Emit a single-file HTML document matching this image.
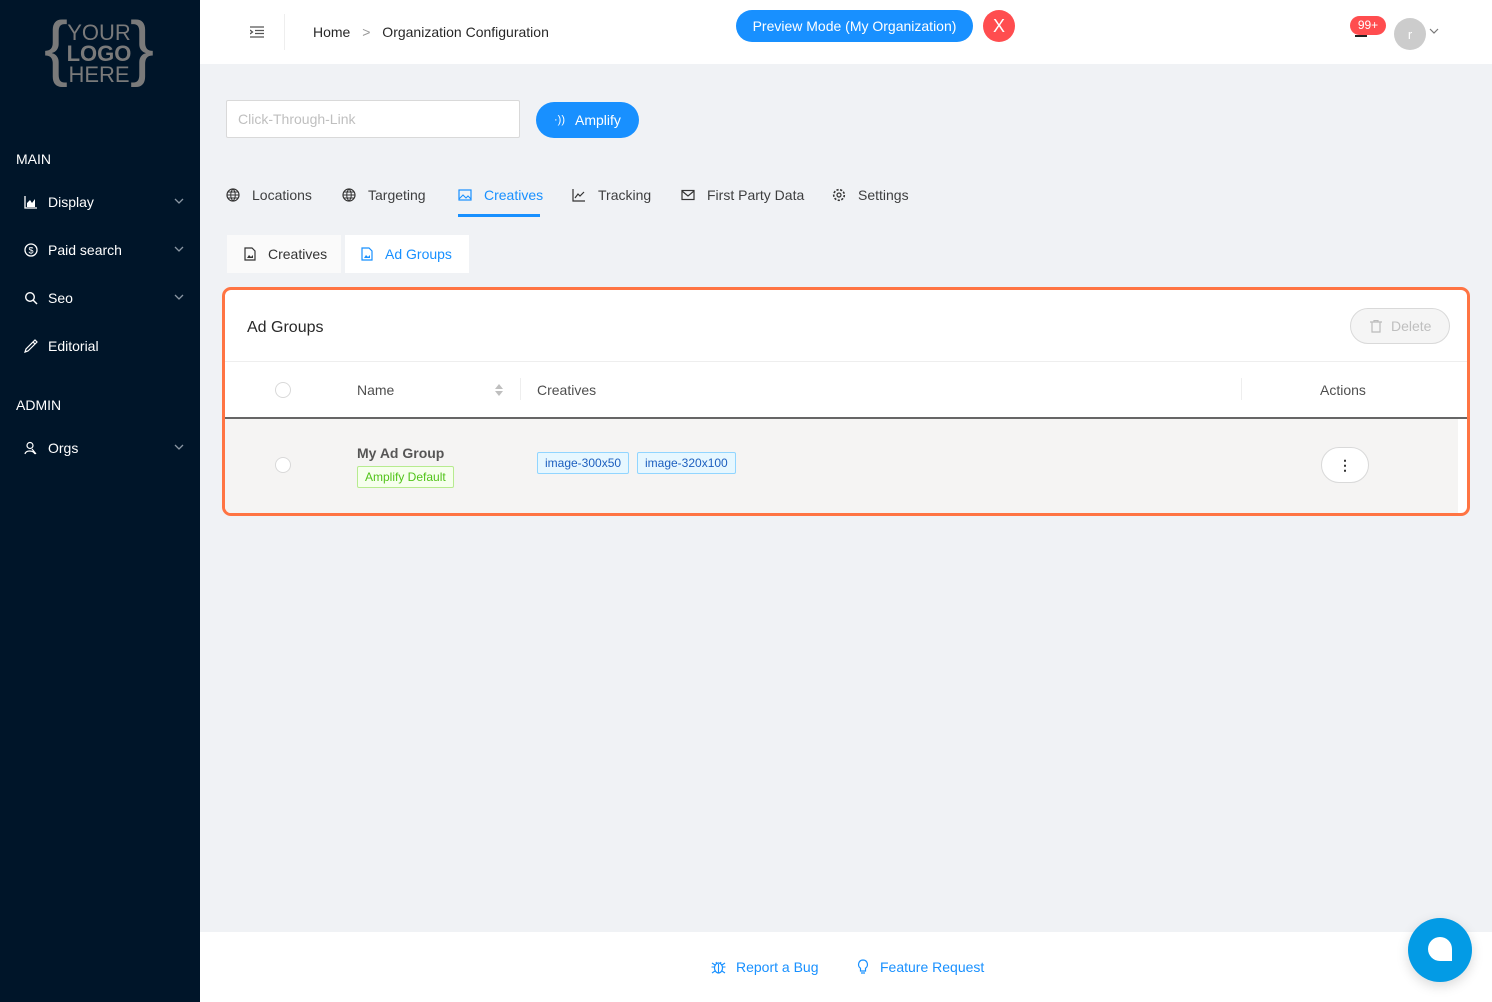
<!DOCTYPE html>
<html><head><meta charset="utf-8"><style>
*{box-sizing:border-box;margin:0;padding:0}
body{width:1492px;height:1002px;overflow:hidden;background:#f0f2f5;font-family:"Liberation Sans",sans-serif;font-size:14px;color:rgba(0,0,0,.85);position:relative}
.a{position:absolute}
#side{left:0;top:0;width:200px;height:1002px;background:#001529;color:#fff}
.sec{position:absolute;left:16px;font-size:14px}
.item{position:absolute;left:24px;font-size:14px;display:flex;align-items:center;gap:10px;width:160px}
.item svg{width:14px;height:14px}
.item svg.chev{position:absolute;right:0;top:3px;width:10px;height:8px}
#hdr{left:200px;top:0;width:1292px;height:64px;background:#fff}
.tab{position:absolute;top:187px;display:flex;align-items:center;gap:12px;font-size:14px;color:rgba(0,0,0,.75)}
.tab svg{width:14px;height:14px}
</style></head><body>
<div id="side" class="a">
  <div class="a" style="left:44px;top:10px;width:110px;height:84px;color:#7a7a7a;text-align:center">
    <div class="a" style="left:0;top:-4px;font-size:72px;font-weight:300;line-height:84px">{</div>
    <div class="a" style="right:0;top:-4px;font-size:72px;font-weight:300;line-height:84px">}</div>
    <div class="a" style="left:22px;top:12px;width:66px;font-size:22px;line-height:21px">YOUR<br><b>LOGO</b><br>HERE</div>
  </div>
  <div class="sec" style="top:151px">MAIN</div>
  <div class="item" style="top:194px"><svg viewBox="0 0 14 14"><path d="M1 1v12h12" stroke="#fff" fill="none" stroke-width="1.3"/><path d="M3 12V8l3-3 2 3 3-4v8z" fill="#fff"/></svg>Display<svg class="chev" viewBox="0 0 10 8"><path d="M1 2l4 4 4-4" stroke="#8a96a3" fill="none" stroke-width="1.3"/></svg></div>
  <div class="item" style="top:242px"><svg viewBox="0 0 14 14"><circle cx="7" cy="7" r="6" stroke="#fff" fill="none" stroke-width="1.3"/><text x="7" y="10.5" font-size="9" text-anchor="middle" fill="#fff">$</text></svg>Paid search<svg class="chev" viewBox="0 0 10 8"><path d="M1 2l4 4 4-4" stroke="#8a96a3" fill="none" stroke-width="1.3"/></svg></div>
  <div class="item" style="top:290px"><svg viewBox="0 0 14 14"><circle cx="6" cy="6" r="4.3" stroke="#fff" fill="none" stroke-width="1.4"/><path d="M9 9l4 4" stroke="#fff" stroke-width="1.5"/></svg>Seo<svg class="chev" viewBox="0 0 10 8"><path d="M1 2l4 4 4-4" stroke="#8a96a3" fill="none" stroke-width="1.3"/></svg></div>
  <div class="item" style="top:338px"><svg viewBox="0 0 14 14"><path d="M1 13l3-1 7-7-2-2-7 7zM9 3l2-2 2 2-2 2" stroke="#fff" fill="none" stroke-width="1.2"/></svg>Editorial</div>
  <div class="sec" style="top:397px">ADMIN</div>
  <div class="item" style="top:440px"><svg viewBox="0 0 14 14"><circle cx="6" cy="4.5" r="3" stroke="#fff" fill="none" stroke-width="1.2"/><path d="M1 13c1-4 8-4 10 0M8 8l4 5" stroke="#fff" fill="none" stroke-width="1.2"/></svg>Orgs<svg class="chev" viewBox="0 0 10 8"><path d="M1 2l4 4 4-4" stroke="#8a96a3" fill="none" stroke-width="1.3"/></svg></div>
</div>

<div id="hdr" class="a">
  <svg class="a" style="left:50px;top:26px" width="14" height="12" viewBox="0 0 14 12"><path d="M0 1h14M5 4.5h9M5 7.5h9M0 11h14M0 4l2.5 2L0 8" stroke="#555" fill="none" stroke-width="1.3"/></svg>
  <div class="a" style="left:84px;top:14px;width:1px;height:36px;background:#eee"></div>
  <div class="a" style="left:113px;top:24px;font-size:14px;color:rgba(0,0,0,.85)">Home <span style="color:#999;margin:0 8px">&gt;</span> Organization Configuration</div>
  <div class="a" style="left:536px;top:10px;width:237px;height:32px;border-radius:16px;background:#1890ff;color:#fff;font-size:14px;line-height:32px;text-align:center">Preview Mode (My Organization)</div>
  <div class="a" style="left:783px;top:10px;width:32px;height:32px;border-radius:50%;background:#ff4d4f;color:#fff;font-size:18px;line-height:32px;text-align:center">X</div>
  <div class="a" style="left:1150px;top:16px;width:36px;height:19px;border-radius:10px;background:#ff4d4f;color:#fff;font-size:12px;line-height:19px;text-align:center">99+</div>
  <div class="a" style="left:1155px;top:35px;width:12px;height:2px;background:#222"></div>
  <div class="a" style="left:1194px;top:18px;width:32px;height:32px;border-radius:50%;background:#ccc;color:#fff;font-size:13px;line-height:34px;text-align:center">r</div>
  <svg class="a" style="left:1229px;top:28px" width="10" height="7" viewBox="0 0 10 7"><path d="M1 1l4 4 4-4" stroke="#777" fill="none" stroke-width="1.2"/></svg>
</div>

<div class="a" style="left:226px;top:100px;width:294px;height:38px;background:#fff;border:1px solid #d9d9d9;border-radius:2px;color:#bfbfbf;padding-left:11px;line-height:36px">Click-Through-Link</div>
<div class="a" style="left:536px;top:102px;width:103px;height:36px;border-radius:18px;background:#1890ff;color:#fff;line-height:36px;font-size:14px;padding-left:39px">Amplify<span class="a" style="left:18px;top:0;font-size:11px">·))</span></div>

<div class="tab" style="left:226px"><svg viewBox="0 0 14 14"><circle cx="7" cy="7" r="6" stroke="#333" fill="none" stroke-width="1.2"/><path d="M1 7h12M7 1c-3 3-3 9 0 12M7 1c3 3 3 9 0 12M2 4h10M2 10h10" stroke="#333" fill="none" stroke-width="1"/></svg>Locations</div>
<div class="tab" style="left:342px"><svg viewBox="0 0 14 14"><circle cx="7" cy="7" r="6" stroke="#333" fill="none" stroke-width="1.2"/><path d="M1 7h12M7 1c-3 3-3 9 0 12M7 1c3 3 3 9 0 12M2 4h10M2 10h10" stroke="#333" fill="none" stroke-width="1"/></svg>Targeting</div>
<div class="tab" style="left:458px;color:#1890ff"><svg viewBox="0 0 14 14"><rect x="1" y="2" width="12" height="10" stroke="#1890ff" fill="none" stroke-width="1.2"/><path d="M1 11l4-4 3 3 2-2 3 3" stroke="#1890ff" fill="none"/></svg>Creatives</div>
<div class="a" style="left:458px;top:214px;width:82px;height:3px;background:#1890ff"></div>
<div class="tab" style="left:572px"><svg viewBox="0 0 14 14"><path d="M1 1v12h12M3 10l3-4 2 2 4-4" stroke="#333" fill="none" stroke-width="1.2"/></svg>Tracking</div>
<div class="tab" style="left:681px"><svg viewBox="0 0 14 14"><rect x="1" y="2.5" width="12" height="9" stroke="#333" fill="none" stroke-width="1.2"/><path d="M1 3l6 5 6-5" stroke="#333" fill="none" stroke-width="1.2"/></svg>First Party Data</div>
<div class="tab" style="left:832px"><svg viewBox="0 0 14 14"><circle cx="7" cy="7" r="2" stroke="#333" fill="none" stroke-width="1.2"/><circle cx="7" cy="7" r="5.3" stroke="#333" fill="none" stroke-width="1.6" stroke-dasharray="2.2 1.5"/></svg>Settings</div>

<div class="a" style="left:227px;top:235px;width:114px;height:38px;background:#fafafa;display:flex;align-items:center;gap:12px;padding-left:17px;color:rgba(0,0,0,.8)"><svg width="12" height="14" viewBox="0 0 12 14"><path d="M1 1h7l3 3v9H1z" stroke="#333" fill="none" stroke-width="1.2"/><path d="M3 11l2-3 2 2 2-2v3z" fill="#333"/></svg>Creatives</div>
<div class="a" style="left:345px;top:235px;width:124px;height:38px;background:#fff;display:flex;align-items:center;gap:12px;padding-left:16px;color:#1890ff"><svg width="12" height="14" viewBox="0 0 12 14"><path d="M1 1h7l3 3v9H1z" stroke="#1890ff" fill="none" stroke-width="1.2"/><path d="M3 11l2-3 2 2 2-2v3z" fill="#1890ff"/></svg>Ad Groups</div>

<div class="a" style="left:222px;top:287px;width:1248px;height:229px;border:3px solid #ff7443;border-radius:9px;background:#fff;overflow:hidden">
  <div class="a" style="left:22px;top:29px;font-size:16px;color:rgba(0,0,0,.85)">Ad Groups</div>
  <div class="a" style="left:1125px;top:18px;width:100px;height:36px;border:1px solid #d9d9d9;border-radius:18px;background:#f5f5f5;color:#bfbfbf;line-height:34px;padding-left:40px">Delete
    <svg class="a" style="left:19px;top:11px" width="12" height="13" viewBox="0 0 12 13"><path d="M0 2h12M4 2V0.5h4V2M2 2v10h8V2" stroke="#bbb" fill="none" stroke-width="1.2"/></svg></div>
  <div class="a" style="left:0;top:71px;width:1242px;height:1px;background:#eee"></div>
  <div class="a" style="left:50px;top:92px;width:16px;height:16px;border:1px solid #d9d9d9;border-radius:50%;background:#fff"></div>
  <div class="a" style="left:132px;top:92px;color:rgba(0,0,0,.7)">Name</div>
  <svg class="a" style="left:270px;top:93px" width="8" height="14" viewBox="0 0 8 14"><path d="M0 6l4-5 4 5zM0 8l4 5 4-5z" fill="#bfbfbf"/></svg>
  <div class="a" style="left:295px;top:88px;width:1px;height:22px;background:#eee"></div>
  <div class="a" style="left:312px;top:92px;color:rgba(0,0,0,.7)">Creatives</div>
  <div class="a" style="left:1016px;top:88px;width:1px;height:22px;background:#eee"></div>
  <div class="a" style="left:1095px;top:92px;color:rgba(0,0,0,.7)">Actions</div>
  <div class="a" style="left:0;top:127px;width:1242px;height:2px;background:#666"></div>
  <div class="a" style="left:0;top:129px;width:1233px;height:100px;background:#f5f4f3"></div>
  <div class="a" style="left:50px;top:167px;width:16px;height:16px;border:1px solid #d9d9d9;border-radius:50%;background:#fff"></div>
  <div class="a" style="left:132px;top:155px;font-weight:bold;color:rgba(0,0,0,.65)">My Ad Group</div>
  <div class="a" style="left:132px;top:176px;height:22px;padding:0 7px;border:1px solid #b7eb8f;background:#f6ffed;color:#52c41a;font-size:12px;line-height:20px;border-radius:2px">Amplify Default</div>
  <div class="a" style="left:312px;top:162px;height:22px;padding:0 7px;border:1px solid #91d5ff;background:#e6f7ff;color:#1d5fbf;font-size:12px;line-height:20px;border-radius:2px">image-300x50</div>
  <div class="a" style="left:412px;top:162px;height:22px;padding:0 7px;border:1px solid #91d5ff;background:#e6f7ff;color:#1d5fbf;font-size:12px;line-height:20px;border-radius:2px">image-320x100</div>
  <div class="a" style="left:1096px;top:157px;width:48px;height:36px;border:1px solid #d9d9d9;border-radius:18px;background:#fff;text-align:center;line-height:34px;font-weight:bold;color:#333">⋮</div>
</div>

<div class="a" style="left:200px;top:932px;width:1292px;height:70px;background:#fff"></div>
<svg class="a" style="left:711px;top:959px" width="15" height="16" viewBox="0 0 15 16"><ellipse cx="7.5" cy="9" rx="4" ry="5" stroke="#1890ff" fill="none" stroke-width="1.2"/><path d="M5 3l1 2M10 3l-1 2M0.5 8h3M11.5 8h3M1 4l3 2M14 4l-3 2M1 14l3-2M14 14l-3-2M7.5 5v9" stroke="#1890ff" fill="none" stroke-width="1.1"/></svg>
<div class="a" style="left:736px;top:959px;color:#1890ff;font-size:14px">Report a Bug</div>
<svg class="a" style="left:857px;top:959px" width="12" height="16" viewBox="0 0 12 16"><path d="M6 1a4.5 4.5 0 0 0-2.5 8.2V12h5V9.2A4.5 4.5 0 0 0 6 1zM4 14h4" stroke="#1890ff" fill="none" stroke-width="1.2"/></svg>
<div class="a" style="left:880px;top:959px;color:#1890ff;font-size:14px">Feature Request</div>
<div class="a" style="left:1408px;top:918px;width:64px;height:64px;border-radius:50%;background:#039be5;box-shadow:0 4px 12px rgba(0,0,0,.15)">
  <div class="a" style="left:20px;top:19px;width:24px;height:24px;background:#fff;border-radius:12px 12px 0 12px"></div>
</div>
</body></html>
